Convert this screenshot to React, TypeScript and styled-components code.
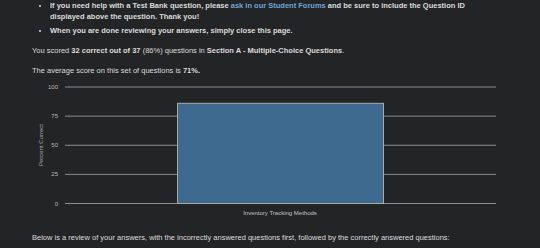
import React from "react";
import styled, { createGlobalStyle } from "styled-components";

const Global = createGlobalStyle`
  html, body { margin: 0; padding: 0; background: #232425; }
  body { font-family: "Liberation Sans", Arial, Helvetica, sans-serif; color: #dcdcdc; }
`;

const Page = styled.div`
  width: 540px;
  height: 248px;
  overflow: hidden;
  padding: 0 44px 0 32px;
  box-sizing: border-box;
  font-size: 7.5px;
  line-height: 11px;
`;

const List = styled.ul`
  margin: 0;
  padding-left: 18px;
  list-style: disc;
`;

const Item = styled.li`
  font-weight: bold;
  & + & { margin-top: 3px; }
`;

const Link = styled.a`
  color: #6ea6db;
  text-decoration: none;
`;

const Para = styled.p<{ $top: number }>`
  margin: ${(p) => p.$top}px 0 0 0;
  white-space: nowrap;
`;

const Chart = styled.svg`
  display: block;
  margin-top: 5px;
`;

const ticks = [100, 75, 50, 25, 0];

function BarChart() {
  const x1 = 33, x2 = 464;
  const yFor = (v: number) => 122.5 - (v / 100) * 116.5;
  return (
    <Chart width={464} height={140} viewBox="0 0 464 140">
      {ticks.map((t) => (
        <g key={t}>
          <line x1={x1} x2={x2} y1={yFor(t)} y2={yFor(t)} stroke="#8c8c8c" strokeWidth={1} />
          <text x={26} y={yFor(t) + 2} textAnchor="end" fontSize={6} fill="#bdbdbd" fontFamily="Liberation Sans, sans-serif">{t}</text>
        </g>
      ))}
      <rect x={145.5} y={yFor(86)} width={206} height={yFor(0) - yFor(86)} fill="#3e6a8f" stroke="#a9a9a9" strokeWidth={1} />
      <text x={248} y={134} textAnchor="middle" fontSize={6} fill="#c4c4c4" fontFamily="Liberation Sans, sans-serif">Inventory Tracking Methods</text>
      <text transform="translate(11 64) rotate(-90)" textAnchor="middle" fontSize={6} fill="#a8a8a8" fontFamily="Liberation Sans, sans-serif">Percent Correct</text>
    </Chart>
  );
}

export default function App() {
  return (
    <>
      <Global />
      <Page>
        <List>
          <Item>
            If you need help with a Test Bank question, please <Link href="#">ask in our Student Forums</Link> and be sure to include the Question ID displayed above the question. Thank you!
          </Item>
          <Item>When you are done reviewing your answers, simply close this page.</Item>
        </List>
        <Para $top={9}>
          You scored <b>32 correct out of 37</b> (86%) questions in <b>Section A - Multiple-Choice Questions</b>.
        </Para>
        <Para $top={9}>
          The average score on this set of questions is <b>71%.</b>
        </Para>
        <BarChart />
        <Para $top={11}>
          Below is a review of your answers, with the incorrectly answered questions first, followed by the correctly answered questions:
        </Para>
      </Page>
    </>
  );
}
